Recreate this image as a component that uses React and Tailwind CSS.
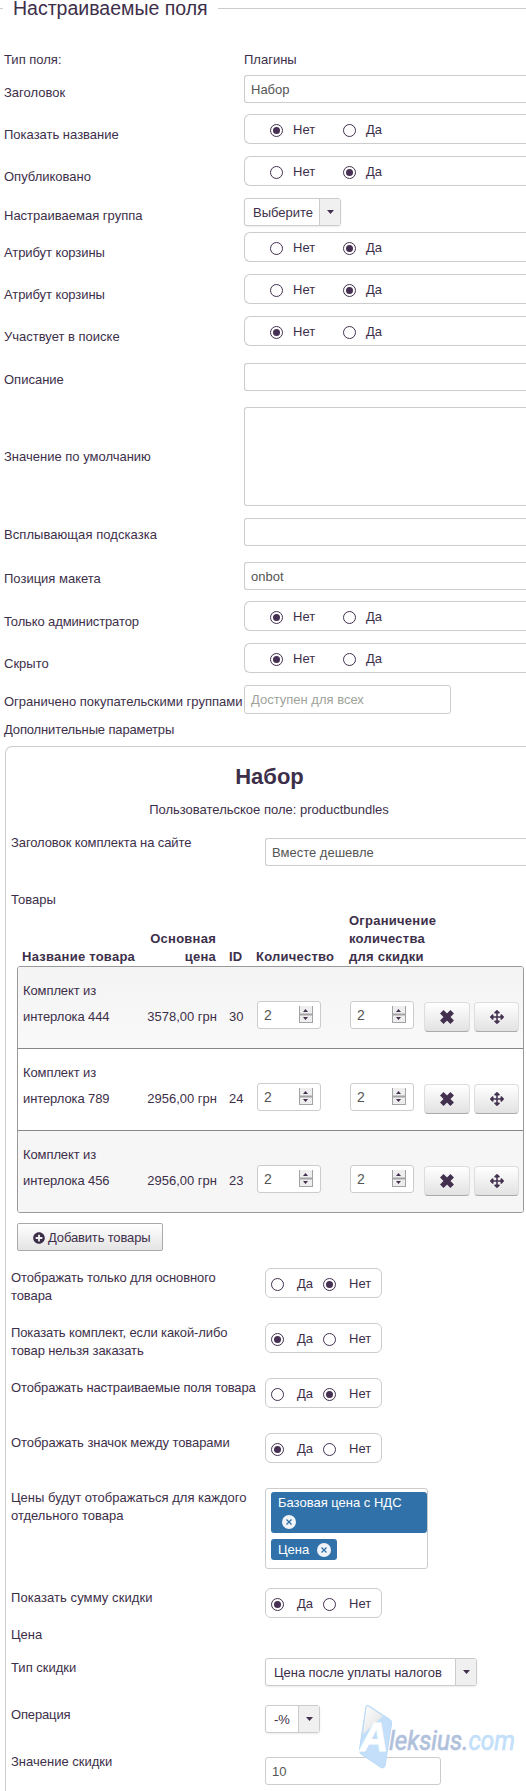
import React, { useState } from 'react';
import clsx from 'clsx';
import { FaArrowsAlt, FaPlusCircle } from 'react-icons/fa';

const products = [
  { id: 30, name: ['Комплект из', 'интерлока 444'], price: '3578,00 грн', qty: 2, limit: 2 },
  { id: 24, name: ['Комплект из', 'интерлока 789'], price: '2956,00 грн', qty: 2, limit: 2 },
  { id: 23, name: ['Комплект из', 'интерлока 456'], price: '2956,00 грн', qty: 2, limit: 2 },
];

const Radio = ({ checked, onClick }) => (
  <button
    type="button"
    onClick={onClick}
    className="flex h-[13px] w-[13px] shrink-0 items-center justify-center rounded-full border border-[#43304f] bg-white"
  >
    {checked && <span className="h-[7px] w-[7px] rounded-full bg-[#452f52]" />}
  </button>
);

// wide "Нет / Да" group of the main form
const YesNoField = ({ value }) => {
  const [selected, setSelected] = useState(value);
  return (
    <div className="flex h-[30px] flex-1 items-center rounded-l-[6px] border border-r-0 border-[#ccc] pl-[25px] pt-[2px]">
      <Radio checked={selected === 'no'} onClick={() => setSelected('no')} />
      <span className="ml-[10px] w-[50px]">Нет</span>
      <Radio checked={selected === 'yes'} onClick={() => setSelected('yes')} />
      <span className="ml-[10px]">Да</span>
    </div>
  );
};

// compact "Да / Нет" group of the plugin settings
const YesNoBox = ({ value }) => {
  const [selected, setSelected] = useState(value);
  return (
    <div className="flex h-[30px] w-[117px] items-center rounded-[6px] border border-[#ccc] pl-[5px]">
      <div className="mt-[3px]"><Radio checked={selected === 'yes'} onClick={() => setSelected('yes')} /></div>
      <span className="ml-[13px] mt-px w-[26px]">Да</span>
      <div className="mt-[3px]"><Radio checked={selected === 'no'} onClick={() => setSelected('no')} /></div>
      <span className="ml-[13px] mt-px">Нет</span>
    </div>
  );
};

const TextField = ({ children, className }) => (
  <div className={clsx('h-[28px] rounded-[3px] border border-[#ccc] bg-white pl-[6px] pt-[5px] text-[#555]', className)}>
    {children}
  </div>
);

const WideField = ({ children, className }) => (
  <TextField className={clsx('flex-1 rounded-r-none border-r-0', className)}>{children}</TextField>
);

const Select = ({ children, className }) => (
  <div className={clsx('flex h-[28px] rounded-[3px] border border-[#ccc] bg-white shadow-[0_1px_2px_rgba(0,0,0,0.08)]', className)}>
    <span className="flex-1 whitespace-nowrap pl-[8px] pt-[5px]">{children}</span>
    <span className="flex w-[21px] items-center justify-center border-l border-[#ccc] bg-[#f0f0f0]">
      <svg width="7" height="4" viewBox="0 0 7 4"><path d="M0 0h7L3.5 4z" fill="#43304f" /></svg>
    </span>
  </div>
);

const Row = ({ label, className, labelClass = 'pt-[8px]', children }) => (
  <div className={clsx('flex items-start', className)}>
    <div className={clsx('w-[240px] shrink-0 whitespace-nowrap', labelClass)}>{label}</div>
    {children}
  </div>
);

const PluginRow = ({ label, className, labelClass, children }) => (
  <div className={clsx('flex items-start', className)}>
    <div className={clsx('-mr-[10px] w-[264px] shrink-0 whitespace-pre-line pt-px', labelClass)}>{label}</div>
    {children}
  </div>
);

const Spinner = ({ value }) => (
  <div className="flex h-[28px] w-[64px] rounded-[3px] border border-[#ccc] bg-white pl-[6px] text-[#555]">
    <span className="w-[35px] pt-[4px] text-[14px]">{value}</span>
    <svg width="14" height="17" viewBox="0 0 14 17" className="mt-[4px]">
      <rect width="14" height="17" fill="#eee" />
      <path d="M.5 0v17M13.5 0v17M0 16.5h14" stroke="#a3a3a3" fill="none" />
      <path d="M0 8.500h14" stroke="#a3a3a3" strokeWidth="2" />
      <path d="M4 6h5L6.500 3zM4 11h5L6.500 14z" fill="#43304f" />
    </svg>
  </div>
);

const IconButton = ({ children, className }) => (
  <button
    type="button"
    className={clsx(
      'flex h-[30px] items-center justify-center rounded-[4px] border border-[#ddd] border-b-[#aaa] bg-linear-to-b from-white to-[#e2e2e2] text-[#43304f]',
      className
    )}
  >
    {children}
  </button>
);

const ProductRow = ({ product, index }) => (
  <div
    className={clsx(
      'flex border-[#888]',
      index === 2 ? 'h-[81px] bg-[#f6f6f6]' : 'h-[82px] border-b',
      index === 0 && 'bg-linear-to-b from-[#f4f4f4] to-[#f9f9f9]'
    )}
  >
    <div className="w-[110px] pl-[5px] pt-[11px] leading-[26px] tracking-[-0.1px]">
      {product.name[0]}
      <br />
      {product.name[1]}
    </div>
    <div className="w-[89px] whitespace-nowrap pt-[37px] text-right leading-[26px]">{product.price}</div>
    <div className="w-[40px] pl-[12px] pt-[37px] leading-[26px]">{product.id}</div>
    <div className="w-[93px] pt-[34px]"><Spinner value={product.qty} /></div>
    <div className="w-[74px] pt-[34px]"><Spinner value={product.limit} /></div>
    <div className="flex gap-[4px] pt-[35px]">
      <IconButton className="w-[46px]">
        <svg width="14" height="14" viewBox="0 0 14 14">
          <path d="M1.800 1.800l10.400 10.400M12.200 1.800L1.800 12.200" stroke="#43304f" strokeWidth="5" />
        </svg>
      </IconButton>
      <IconButton className="w-[45px]"><FaArrowsAlt size={14} /></IconButton>
    </div>
  </div>
);

const TagClose = ({ className }) => (
  <svg width="14" height="14" viewBox="0 0 14 14" className={className}>
    <circle cx="7" cy="7" r="7" fill="#f0f3f7" />
    <path d="M4.500 4.500l5 5M9.500 4.500l-5 5" stroke="#3071a9" strokeWidth="1.300" />
  </svg>
);

const Watermark = () => (
  <svg width="168" height="66" viewBox="0 0 168 66" className="absolute left-[357px] top-[1703px]">
    <defs>
      <linearGradient id="fold" x1="0" y1="0" x2="1" y2="1">
        <stop offset="0" stopColor="#fff" />
        <stop offset="1" stopColor="#ddd" />
      </linearGradient>
    </defs>
    <path d="M9 3.500Q10 1.500 12 3L33 16.500Q35 18 34.700 20L28 63Q27 66 24 64.500L4 51Q2 49 2.500 46z" fill="#c3dffa" />
    <path d="M9.500 4Q11 2.500 12 4L26 13L6 31z" fill="url(#fold)" />
    <path d="M9 3.500Q10 1.500 12 3L33 16.500Q35 18 34.700 20L28 63Q27 66 24 64.500L4 51Q2 49 2.500 46z" fill="none" stroke="#b9daf8" />
    <text x="3" y="48" textLength="28" lengthAdjust="spacingAndGlyphs" fill="#fff" stroke="#fff" fontFamily="Liberation Sans" fontSize="40" fontWeight="bold" fontStyle="italic">A</text>
    <text x="32" y="47" textLength="126" lengthAdjust="spacingAndGlyphs" strokeWidth=".7" fontFamily="Roboto" fontSize="27" fontStyle="italic">
      <tspan fill="#b0c1dc" stroke="#b0c1dc">leksius.</tspan>
      <tspan fill="#c3dffa" stroke="#c3dffa">com</tspan>
    </text>
  </svg>
);

const BundleSettings = () => (
  <section className="ml-[5px] h-[1045px] rounded-tl-[7px] border-l border-t border-[#ccc] pl-[5px]">
    <h2 className="ml-[2px] mt-[17px] text-center text-[22px] font-bold leading-[26px]">Набор</h2>
    <p className="ml-px mt-[11px] text-center">Пользовательское поле: productbundles</p>

    <PluginRow label="Заголовок комплекта на сайте" labelClass="tracking-[-0.1px] -mt-px" className="mt-[15px] h-[57px]">
      <WideField className="mt-[4px]">Вместе дешевле</WideField>
    </PluginRow>
    <div className="h-[18px]">Товары</div>

    <div className="ml-[6px] mr-[2px] mt-[3px]">
      <div className="flex h-[54px] items-end font-bold tracking-[0.25px]">
        <div className="w-[106px] whitespace-nowrap pl-[5px]">Название товара</div>
        <div className="w-[93px] text-right">Основная<br />цена</div>
        <div className="w-[40px] pl-[13px]">ID</div>
        <div className="w-[93px]">Количество</div>
        <div>Ограничение<br />количества<br />для скидки</div>
      </div>
      <div className="overflow-hidden rounded-[3px] border border-[#999]">
        {products.map((product, index) => (
          <ProductRow key={product.id} product={product} index={index} />
        ))}
      </div>
      <button
        type="button"
        className="mt-[10px] flex h-[28px] w-[146px] items-center rounded-[2px] border border-[#aaa] bg-linear-to-b from-white to-[#e4e4e4] pl-[15px] pt-[2px]"
      >
        <FaPlusCircle size={12} />
        <span className="ml-[3px] tracking-[-0.15px]">Добавить товары</span>
      </button>
    </div>

    <PluginRow label={'Отображать только для основного\nтовара'} labelClass="tracking-[-0.1px]" className="mt-[17px] h-[55px]"><YesNoBox value="no" /></PluginRow>
    <PluginRow label={'Показать комплект, если какой-либо\nтовар нельзя заказать'} labelClass="tracking-[-0.1px]" className="h-[55px]"><YesNoBox value="yes" /></PluginRow>
    <PluginRow label="Отображать настраиваемые поля товара" labelClass="tracking-[-0.14px]" className="h-[55px]"><YesNoBox value="no" /></PluginRow>
    <PluginRow label="Отображать значок между товарами" labelClass="tracking-[-0.06px]" className="h-[55px]"><YesNoBox value="yes" /></PluginRow>
    <PluginRow label={'Цены будут отображаться для каждого\nотдельного товара'} className="h-[100px]">
      <div className="h-[81px] w-[163px] rounded-[3px] border border-[#ccc] pl-[5px] pt-[3px] text-white">
        <div className="h-[41px] rounded-[3px] bg-[#3071a9] pl-[7px] pt-[2px]">
          Базовая цена с НДС
          <TagClose className="ml-[4px] mt-[3px] block" />
        </div>
        <div className="mt-[6px] flex h-[21px] w-[66px] items-center rounded-[3px] bg-[#3071a9] pl-[7px]">
          <span className="mt-px">Цена</span>
          <TagClose className="ml-[8px]" />
        </div>
      </div>
    </PluginRow>
    <PluginRow label="Показать сумму скидки" labelClass="tracking-[0.08px]" className="h-[37px]"><YesNoBox value="yes" /></PluginRow>
    <PluginRow label="Цена" className="h-[33px]" />
    <PluginRow label="Тип скидки" className="h-[47px]"><Select className="w-[212px] tracking-[-0.05px]">Цена после уплаты налогов</Select></PluginRow>
    <PluginRow label="Операция" labelClass="tracking-[-0.15px]" className="h-[47px]"><Select className="w-[55px]">-%</Select></PluginRow>
    <PluginRow label="Значение скидки"><TextField className="mt-[5px] w-[176px]">10</TextField></PluginRow>
  </section>
);

const App = () => (
  <div className="relative h-[1791px] w-[526px] overflow-hidden bg-white font-['Liberation_Sans',Arial,sans-serif] text-[13px] leading-[18px] text-[#3d2f4a]">
    <div className="flex h-[51px] items-start">
      <span className="mt-[8px] h-px w-[3px] bg-[#ccc]" />
      <h1 className="ml-[10px] mt-[-4px] whitespace-nowrap text-[19.5px] leading-[24px]">Настраиваемые поля</h1>
      <span className="ml-[10px] mt-[8px] h-px flex-1 bg-[#ccc]" />
    </div>

    <div className="pl-[4px]">
      <Row label="Тип поля:" labelClass="" className="h-[24px]">Плагины</Row>
      <Row label="Заголовок" labelClass="pt-[9px]" className="h-[39px]"><WideField>Набор</WideField></Row>
      <Row label="Показать название" labelClass="pt-[12px]" className="h-[42px]"><YesNoField value="no" /></Row>
      <Row label="Опубликовано" labelClass="pt-[12px]" className="h-[42px]"><YesNoField value="yes" /></Row>
      <Row label="Настраиваемая группа" labelClass="pt-[9px]" className="h-[34px]"><Select className="w-[97px]">Выберите</Select></Row>
      <Row label="Атрибут корзины" labelClass="pt-[12px] tracking-[-0.08px]" className="h-[42px]"><YesNoField value="yes" /></Row>
      <Row label="Атрибут корзины" labelClass="pt-[12px] tracking-[-0.08px]" className="h-[42px]"><YesNoField value="yes" /></Row>
      <Row label="Участвует в поиске" labelClass="pt-[12px]" className="h-[47px]"><YesNoField value="no" /></Row>
      <Row label="Описание" className="h-[44px]"><WideField /></Row>
      <Row label="Значение по умолчанию" labelClass="pt-[41px]" className="h-[111px]"><WideField className="h-[99px]" /></Row>
      <Row label="Всплывающая подсказка" labelClass="pt-[8px] tracking-[0.06px]" className="h-[44px]"><WideField /></Row>
      <Row label="Позиция макета" className="h-[39px]"><WideField>onbot</WideField></Row>
      <Row label="Только администратор" labelClass="pt-[12px] tracking-[-0.12px]" className="h-[42px]"><YesNoField value="no" /></Row>
      <Row label="Скрыто" labelClass="pt-[12px]" className="h-[42px]"><YesNoField value="no" /></Row>
      <Row label="Ограничено покупательскими группами" labelClass="pt-[8px]" className="h-[36px]">
        <TextField className="h-[29px] w-[207px] pl-[5px] text-[#a0a39a]">Доступен для всех</TextField>
      </Row>
      <div className="h-[25px] tracking-[-0.14px]">Дополнительные параметры</div>
    </div>

    <BundleSettings />
    <Watermark />
  </div>
);

export default App;
